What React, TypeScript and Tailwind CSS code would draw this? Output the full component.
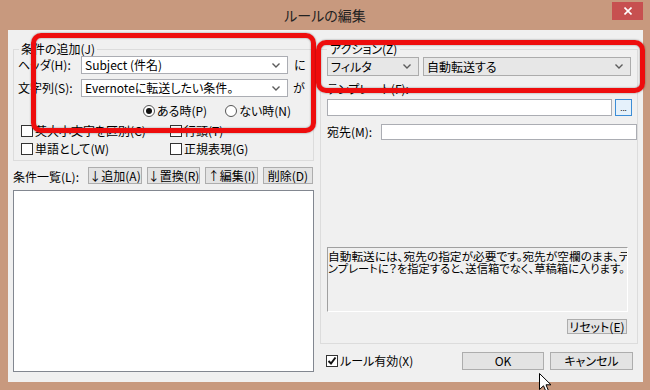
import type { ReactNode } from "react";

const jp = "font-['Noto_Sans_CJK_JP',sans-serif] [font-feature-settings:'palt']";

function Chevron() {
  return (
    <svg className="w-[8px] h-[5px] shrink-0" viewBox="0 0 8 5" fill="none" stroke="#5c5c5c" strokeWidth={1.4}>
      <path d="M0.5 0.5 L4 4 L7.5 0.5" />
    </svg>
  );
}

function Combo({ value, width, editable, height = "h-[18px]" }: { value: string; width: string; editable?: boolean; height?: string }) {
  return (
    <div
      className={`${width} ${height} flex items-center justify-between pl-[3px] pr-[7px] border ${
        editable ? "bg-white border-[#abadb3]" : "bg-[#e7e7e7] border-[#acacac]"
      }`}
    >
      <span className="leading-none whitespace-nowrap">{value}</span>
      <Chevron />
    </div>
  );
}

function Btn({ children, className }: { children: ReactNode; className: string }) {
  return (
    <div className={`${className} flex items-center justify-center border border-[#adadad] bg-[#e3e3e3] leading-none whitespace-nowrap`}>
      {children}
    </div>
  );
}

function Check({ label, checked }: { label: string; checked?: boolean }) {
  return (
    <div className="flex items-center gap-[2px] h-[12px]">
      <div className="w-[12px] h-[12px] border border-[#333] bg-white flex items-center justify-center">
        {checked && (
          <svg className="w-[10px] h-[10px]" viewBox="0 0 10 10" fill="none" stroke="#111" strokeWidth={2}>
            <path d="M1.5 5 L4 7.5 L8.5 1.5" />
          </svg>
        )}
      </div>
      <span className="leading-none whitespace-nowrap">{label}</span>
    </div>
  );
}

function Radio({ label, checked }: { label: string; checked?: boolean }) {
  return (
    <div className="flex items-center gap-[2px] h-[12px]">
      <div className="w-[12px] h-[12px] rounded-full border border-[#555] bg-white flex items-center justify-center">
        {checked && <div className="w-[6px] h-[6px] rounded-full bg-[#111]" />}
      </div>
      <span className="leading-none whitespace-nowrap">{label}</span>
    </div>
  );
}

export default function App() {
  return (
    <div className={`relative w-[650px] h-[390px] bg-[#c8997e] flex flex-col overflow-hidden text-[12px] text-black ${jp}`}>
      {/* Title bar */}
      <div className="h-[30px] grid grid-cols-[1fr_auto_1fr] items-center shrink-0">
        <div />
        <div className="text-[14px] text-[#222] leading-none">ルールの編集</div>
        <div className="flex justify-end self-start pr-[7px] pt-[2px]">
          <div className="w-[31px] h-[18px] bg-[#c75050] flex items-center justify-center">
            <svg className="w-[8px] h-[8px]" viewBox="0 0 8 8" stroke="white" strokeWidth={1.6}>
              <path d="M0.5 0.5 L7.5 7.5 M7.5 0.5 L0.5 7.5" />
            </svg>
          </div>
        </div>
      </div>

      {/* Client area */}
      <div className="ml-[8px] w-[635px] h-[352px] bg-[#f0f0f0] flex px-[5px] gap-[6px]">
        {/* Left column */}
        <div className="w-[301px] flex flex-col">
          <fieldset className="mt-[12px] border border-[#dcdcdc] px-[5px] pb-[5px]">
            <legend className="px-[2px] leading-[14px]">条件の追加(J)</legend>
            <div className="flex items-center h-[18px]">
              <span className="w-[63px] -ml-[1px] leading-none">ヘッダ(H):</span>
              <Combo value="Subject (件名)" width="w-[207px]" editable />
              <span className="ml-[6px] leading-none">に</span>
            </div>
            <div className="flex items-center h-[18px] mt-[5px]">
              <span className="w-[63px] -ml-[1px] leading-none">文字列(S):</span>
              <Combo value="Evernoteに転送したい条件。" width="w-[207px]" editable />
              <span className="ml-[5px] leading-none">が</span>
            </div>
            <div className="flex items-center gap-[18px] mt-[8px] ml-[124px]">
              <Radio label="ある時(P)" checked />
              <Radio label="ない時(N)" />
            </div>
            <div className="grid grid-cols-[149px_1fr] mt-[8px] ml-[2px]">
              <Check label="英大小文字を区別(C)" />
              <Check label="行頭(T)" />
            </div>
            <div className="grid grid-cols-[149px_1fr] mt-[6px] ml-[2px]">
              <Check label="単語として(W)" />
              <Check label="正規表現(G)" />
            </div>
          </fieldset>

          <div className="flex items-end h-[17px] mt-[6px]">
            <span className="w-[75px] leading-none pb-[1px]">条件一覧(L):</span>
            <div className="flex gap-[5px]">
              <Btn className="w-[54px] h-[17px]">↓追加(A)</Btn>
              <Btn className="w-[53px] h-[17px]">↓置換(R)</Btn>
              <Btn className="w-[53px] h-[17px]">↑編集(I)</Btn>
              <Btn className="w-[50px] h-[17px]">削除(D)</Btn>
            </div>
          </div>

          <div className="mt-[6px] h-[182px] border border-[#828790] bg-white" />
        </div>

        {/* Right column */}
        <div className="w-[318px] flex flex-col">
          <fieldset className="mt-[12px] h-[302px] border border-[#dcdcdc] pl-[6px] flex flex-col">
            <legend className="px-[3px] leading-[14px]">アクション(Z)</legend>
            <div className="flex gap-[4px] mt-[1px]">
              <Combo value="フィルタ" width="w-[92px]" height="h-[19px]" />
              <Combo value="自動転送する" width="w-[208px]" height="h-[19px]" />
            </div>
            <div className="mt-[6px] leading-[14px] h-[14px]">テンプレート(F):</div>
            <div className="flex mt-[3px] h-[17px]">
              <div className="w-[285px] border border-[#abadb3] bg-white" />
              <div className="ml-[3px] w-[17px] border border-[#3c8dd6] bg-[#e5f1fb] flex items-end justify-center pb-[3px]">
                <span className="text-[8px] leading-none">...</span>
              </div>
            </div>
            <div className="flex items-center mt-[8px] h-[16px]">
              <span className="w-[54px] leading-none">宛先(M):</span>
              <div className="w-[256px] h-[16px] border border-[#abadb3] bg-white" />
            </div>
            <div className="mt-[107px] w-[301px] h-[65px] border border-[#a0a0a0] border-r-white border-b-white bg-[#f0f0f0] pt-[1px] leading-[13px] whitespace-nowrap overflow-hidden">
              <div className="text-[11.7px]">自動転送には、宛先の指定が必要です。宛先が空欄のまま、テ</div>
              <div className="text-[11.3px]">ンプレートに？を指定すると、送信箱でなく、草稿箱に入ります。</div>
            </div>
            <div className="flex justify-end mt-[7px] mr-[10px]">
              <Btn className="w-[60px] h-[15px]">リセット(E)</Btn>
            </div>
          </fieldset>

          <div className="flex items-center h-[18px] mt-[8px] pl-[6px] pr-[5px]">
            <Check label="ルール有効(X)" checked />
            <div className="ml-auto flex gap-[6px]">
              <Btn className="w-[82px] h-[18px]">OK</Btn>
              <Btn className="w-[83px] h-[18px]">キャンセル</Btn>
            </div>
          </div>
        </div>
      </div>

      {/* Red annotation boxes */}
      <div className="absolute left-[31px] top-[33px] w-[285px] h-[100px] border-[5px] border-[#ee0d0d] rounded-[10px] shadow-[0_0_2px_rgba(0,0,0,0.45),inset_0_0_2px_rgba(0,0,0,0.45)]" />
      <div className="absolute left-[316px] top-[40px] w-[329px] h-[53px] border-[5px] border-[#ee0d0d] rounded-[10px] shadow-[0_0_2px_rgba(0,0,0,0.45),inset_0_0_2px_rgba(0,0,0,0.45)]" />

      {/* Mouse cursor */}
      <svg className="absolute left-[539px] top-[373px] w-[13px] h-[20px]" viewBox="0 0 13 20">
        <path d="M0.5 0.5 L0.5 16.5 L4.5 12.8 L7.2 19 L9.6 18 L7 11.8 L12 11.8 Z" fill="white" stroke="black" strokeWidth={1} strokeLinejoin="round" />
      </svg>
    </div>
  );
}
